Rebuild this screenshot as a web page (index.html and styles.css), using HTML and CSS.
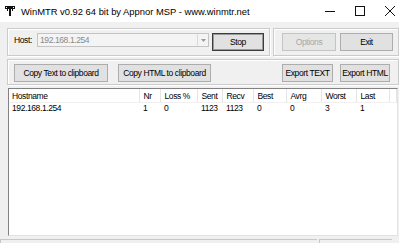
FILE: index.html
```html
<!DOCTYPE html>
<html lang="en">
<head>
  <meta charset="UTF-8" />
  <title>WinMTR</title>
  <link rel="stylesheet" href="styles.css">
</head>
<body>
  <div class="window">
    <div class="titlebar">
      <svg class="app-icon" width="10" height="10" viewBox="0 0 10 10">
        <rect x="0" y="0" width="10" height="3" fill="#111"/>
        <rect x="1" y="1" width="1" height="1" fill="#fff"/>
        <rect x="8" y="1" width="1" height="1" fill="#fff"/>
        <rect x="4" y="3" width="2" height="7" fill="#111"/>
        <rect x="2" y="3" width="1" height="2" fill="#111"/>
        <rect x="7" y="3" width="1" height="2" fill="#111"/>
      </svg>
      <span class="title">WinMTR v0.92 64 bit by Appnor MSP - www.winmtr.net</span>
      <div class="controls">
        <span class="ctl">
          <svg width="10" height="10" viewBox="0 0 10 10"><rect x="0" y="5" width="10" height="1" fill="#111"/></svg>
        </span>
        <span class="ctl">
          <svg width="10" height="10" viewBox="0 0 10 10"><rect x="0.5" y="0.5" width="9" height="9" fill="none" stroke="#111"/></svg>
        </span>
        <span class="ctl">
          <svg width="10" height="10" viewBox="0 0 10 10"><path d="M0 0 L10 10 M10 0 L0 10" stroke="#111" stroke-width="1"/></svg>
        </span>
      </div>
    </div>

    <div class="row-top">
      <div class="group group-host">
        <span class="label">Host:</span>
        <div class="combo">
          <span class="combo-text">192.168.1.254</span>
          <span class="combo-arrow">
            <svg width="5" height="3" viewBox="0 0 5 3"><path d="M0 0 H5 L2.5 3 Z" fill="#9a9a9a"/></svg>
          </span>
        </div>
        <button class="btn btn-default btn-stop">Stop</button>
      </div>
      <div class="group group-opts">
        <button class="btn btn-disabled btn-options">Options</button>
        <button class="btn btn-exit">Exit</button>
      </div>
    </div>

    <div class="group group-copy">
      <button class="btn btn-copy-text">Copy Text to clipboard</button>
      <button class="btn btn-copy-html">Copy HTML to clipboard</button>
      <div class="spacer"></div>
      <button class="btn btn-exp-text">Export TEXT</button>
      <button class="btn btn-exp-html">Export HTML</button>
    </div>

    <div class="list">
      <table>
        <colgroup>
          <col style="width:130px"><col style="width:21px"><col style="width:37px">
          <col style="width:25px"><col style="width:31px"><col style="width:33px">
          <col style="width:35px"><col style="width:35px"><col style="width:33px"><col>
        </colgroup>
        <thead>
          <tr>
            <th>Hostname</th><th>Nr</th><th>Loss %</th><th>Sent</th><th>Recv</th>
            <th>Best</th><th>Avrg</th><th>Worst</th><th>Last</th><th></th>
          </tr>
        </thead>
        <tbody>
          <tr>
            <td>192.168.1.254</td><td>1</td><td>0</td><td>1123</td><td>1123</td>
            <td>0</td><td>0</td><td>3</td><td>1</td><td></td>
          </tr>
        </tbody>
      </table>
    </div>

    <div class="statusbar">
      <div class="pane pane-main"></div>
      <div class="pane pane-side"></div>
    </div>
  </div>
</body>
</html>
```

FILE: styles.css
```css
html, body {
  margin: 0;
  padding: 0;
  overflow: hidden;
}

body {
  font-family: "Liberation Sans", Arial, sans-serif;
  font-size: 8.5px;
  letter-spacing: -0.4px;
  color: #000;
  background: #f0f0f0;
}

.window {
  width: 405px;
  height: 243px;
  background: #f0f0f0;
}

.titlebar {
  height: 22px;
  background: #fff;
  display: flex;
  align-items: center;
}

.app-icon {
  margin-left: 5px;
  margin-right: 6px;
}

.title {
  font-size: 9.4px;
  letter-spacing: 0;
  color: #000;
  white-space: nowrap;
}

.controls {
  margin-left: auto;
  display: flex;
}

.ctl {
  width: 30px;
  height: 22px;
  display: flex;
  align-items: center;
  justify-content: center;
}

.row-top {
  display: flex;
  gap: 3px;
  margin: 6px 7px 0 7px;
}

.group {
  box-sizing: border-box;
  border: 1px solid #cbcbcb;
  box-shadow: inset 1px 1px 0 #fff, 1px 1px 0 #fff;
  display: flex;
  align-items: flex-start;
}

.group-host {
  width: 263px;
  height: 28px;
  padding: 4px 5px 0 6px;
}

.group-opts {
  width: 126px;
  height: 28px;
  padding: 4px 5px 0 8px;
  gap: 4px;
}

.label {
  width: 23px;
  line-height: 14px;
}

.combo {
  box-sizing: border-box;
  width: 172px;
  height: 14px;
  border: 1px solid #c4c4c4;
  background: #f4f4f4;
  display: flex;
  align-items: center;
  margin-right: 3px;
}

.combo-text {
  color: #8a8a8a;
  padding-left: 2px;
  flex: 1;
}

.combo-arrow {
  box-sizing: border-box;
  width: 11px;
  height: 12px;
  border-left: 1px solid #dadada;
  display: flex;
  align-items: center;
  justify-content: center;
}

.btn {
  box-sizing: border-box;
  height: 18px;
  padding: 0;
  font-family: inherit;
  font-size: 8.5px;
  letter-spacing: -0.4px;
  white-space: nowrap;
  color: #000;
  background: #e1e1e1;
  border: 1px solid #adadad;
}

.btn-default {
  border: 1px solid #3c3c3c;
  box-shadow: inset 0 0 0 1px #9a9a9a;
}

.btn-disabled {
  color: #a8a8a8;
  border-color: #c4c4c4;
  background: #e6e6e6;
}

.btn-stop { width: 52px; }
.btn-options { width: 54px; }
.btn-exit { width: 53px; }

.group-copy {
  margin: 3px 7px 0 7px;
  width: 392px;
  height: 26px;
  padding: 4px 8px 0 6px;
}

.btn-copy-text { width: 94px; margin-right: 10px; }
.btn-copy-html { width: 93px; }
.btn-exp-text { width: 51px; margin-right: 7px; }
.btn-exp-html { width: 50px; }

.spacer {
  flex: 1;
}

.list {
  box-sizing: border-box;
  margin: 3px 8px 0 8px;
  width: 390px;
  height: 148px;
  background: #fff;
  border-top: 1px solid #828282;
  border-left: 1px solid #828282;
  border-right: 1px solid #e3e3e3;
  border-bottom: 1px solid #e3e3e3;
}

table {
  border-collapse: collapse;
  table-layout: fixed;
  width: 100%;
}

th {
  font-weight: normal;
  text-align: left;
  height: 13px;
  padding: 0 0 0 4px;
  border-right: 1px solid #e5e5e5;
  border-bottom: 1px solid #f0f0f0;
  white-space: nowrap;
  overflow: hidden;
  line-height: 12px;
}

td {
  padding: 0 0 0 4px;
  height: 11px;
  line-height: 11px;
  white-space: nowrap;
}

th:first-child, td:first-child {
  padding-left: 3px;
}

.statusbar {
  margin-top: 3px;
  display: flex;
  gap: 2px;
  height: 6px;
}

.pane {
  box-sizing: border-box;
  height: 6px;
  border-top: 1px solid #c8c8c8;
  border-left: 1px solid #c8c8c8;
}

.pane-main { width: 317px; }
.pane-side { width: 73px; }
```
